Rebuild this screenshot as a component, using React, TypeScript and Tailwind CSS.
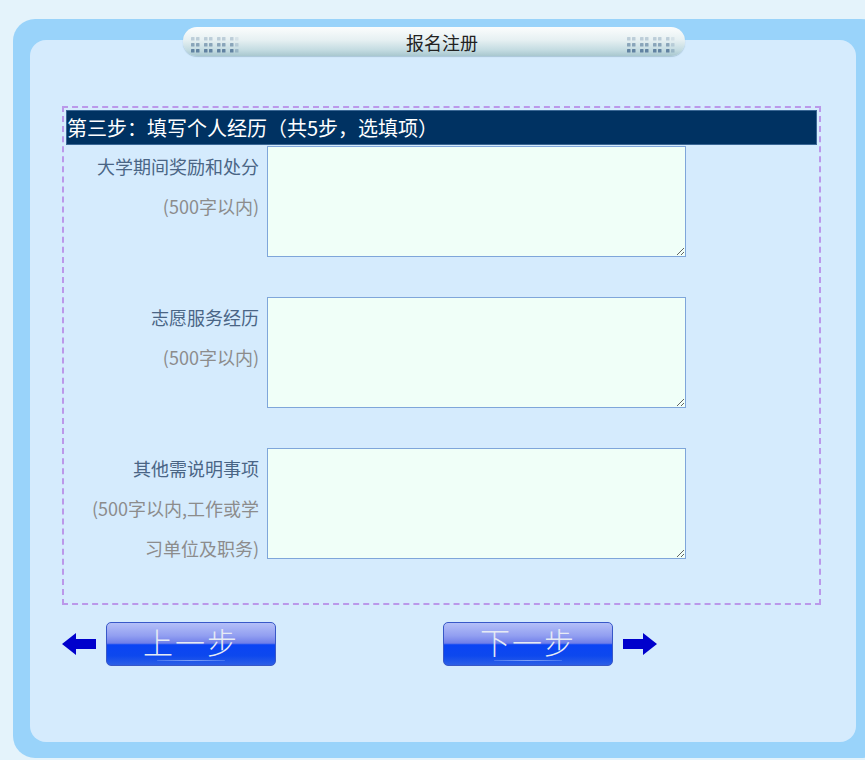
import type { ReactNode } from 'react'

const font = { fontFamily: '"Noto Sans CJK SC", "Noto Sans", sans-serif' }

const rows: { label: string; hint: string[] }[] = [
  { label: '大学期间奖励和处分', hint: ['(500字以内)'] },
  { label: '志愿服务经历', hint: ['(500字以内)'] },
  { label: '其他需说明事项', hint: ['(500字以内,工作或学', '习单位及职务)'] },
]

// dotted grill decoration on both ends of the title tab
function Dots() {
  const cells: ReactNode[] = []
  for (let r = 0; r < 3; r++) {
    for (let g = 0; g < 4; g++) {
      for (let d = 0; d < 2; d++) {
        const x = g * 13 + d * 5
        const y = r * 6
        let op = 0.3 + r * 0.3
        if (g === 3 && d === 1) op *= 0.4
        cells.push(
          <rect key={`${r}-${g}-${d}`} x={x} y={y} width="3.5" height="3.5" rx="0.6" fill="#56799a" opacity={op} />
        )
      }
    }
  }
  return (
    <svg width="52" height="16" viewBox="0 0 52 16">
      {cells}
    </svg>
  )
}

function Arrow({ dir }: { dir: 'left' | 'right' }) {
  return (
    <svg width="34" height="22" viewBox="0 0 34 22" className={dir === 'right' ? 'scale-x-[-1]' : ''}>
      <polygon points="0,11 14,0 14,6 34,6 34,16 14,16 14,22" fill="#0000cc" />
    </svg>
  )
}

function StepButton({ text }: { text: string }) {
  return (
    <button
      className="relative w-[170px] h-[44px] rounded-[5px] border border-[#3858c8] bg-[linear-gradient(to_bottom,#b4bff7_0%,#929ff1_30%,#707fe9_48%,#0a44f4_52%,#0d48ee_78%,#2c5fe6_100%)] text-[#e6ebf5] text-[30px] font-light leading-[1.2] tracking-[2px] flex items-center justify-center"
      style={font}
    >
      <span className="absolute left-[50px] right-[50px] bottom-[4px] h-[1px] rounded-full bg-[radial-gradient(ellipse_at_center,#c4d6ff_0%,#5f88f3_70%,transparent_100%)] opacity-60"></span>
      <span className="relative -mt-[6px]">{text}</span>
    </button>
  )
}

export default function App() {
  return (
    <div className="w-full h-[760px] overflow-hidden bg-[#e4f3fb]" style={font}>
      <div className="relative ml-[13px] mt-[19px] w-[870px] h-[739px] rounded-[22px] bg-[#99d3fa] pt-[21px] pl-[17px]">
        {/* title tab */}
        <div className="absolute left-[170px] top-[8px] w-[502px] h-[29px] rounded-[14px] bg-[linear-gradient(to_bottom,#fbfdfd_0%,#e6f0f2_45%,#c3dbe1_80%,#a9c7cf_100%)] shadow-[0_1px_1px_rgba(90,130,150,0.35)] flex items-center justify-between pl-[8px] pr-[6px] z-10">
          <div className="pt-[6px]">
            <Dots />
          </div>
          <span className="ml-[14px] text-[18px] text-[#222] leading-none">报名注册</span>
          <div className="pt-[6px]">
            <Dots />
          </div>
        </div>

        {/* inner panel */}
        <div className="w-[826px] h-[702px] rounded-[16px] bg-[#d5ebfd] pt-[66px] pl-[32px]">
          <div className="w-[759px] h-[499px] border-2 border-dashed border-[#bb98ea] p-[2px]">
            <div className="h-[35px] bg-[#003262] border border-[#3a6795] text-white text-[20px] leading-none flex items-center">
              第三步：填写个人经历（共5步，选填项）
            </div>

            <div className="mt-[1px] flex flex-col gap-[40px]">
              {rows.map((row) => (
                <div key={row.label} className="flex">
                  <div className="w-[201px] pr-[8px] text-right text-[18px] leading-[40px] whitespace-nowrap">
                    <div className="text-[#4a6585]">{row.label}</div>
                    {row.hint.map((h) => (
                      <div key={h} className="text-[#8c8c8c]">
                        {h}
                      </div>
                    ))}
                  </div>
                  <textarea className="w-[419px] h-[111px] border border-[#7fa6da] bg-[#f0fff8] outline-none"></textarea>
                </div>
              ))}
            </div>
          </div>

          <div className="mt-[17px] flex items-center">
            <Arrow dir="left" />
            <div className="ml-[10px]">
              <StepButton text="上一步" />
            </div>
            <div className="ml-[167px]">
              <StepButton text="下一步" />
            </div>
            <div className="ml-[10px]">
              <Arrow dir="right" />
            </div>
          </div>
        </div>
      </div>
    </div>
  )
}
